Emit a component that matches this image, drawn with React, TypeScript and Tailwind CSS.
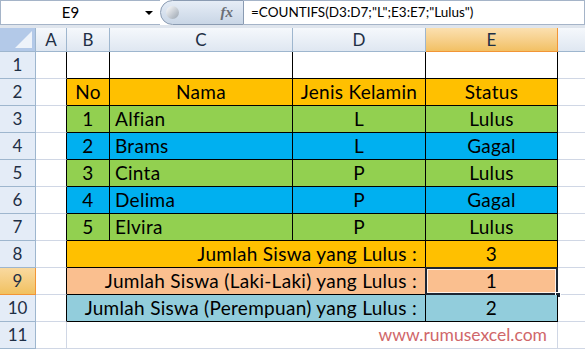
import React from 'react';

const font = { fontFamily: 'Lato, "Liberation Sans", sans-serif' };

interface Row {
  no?: string;
  nama?: string;
  jk?: string;
  status?: string;
  bg: string;
}

const students: Row[] = [
  { no: '1', nama: 'Alfian', jk: 'L', status: 'Lulus', bg: 'bg-[#92d050]' },
  { no: '2', nama: 'Brams', jk: 'L', status: 'Gagal', bg: 'bg-[#00b0f0]' },
  { no: '3', nama: 'Cinta', jk: 'P', status: 'Lulus', bg: 'bg-[#92d050]' },
  { no: '4', nama: 'Delima', jk: 'P', status: 'Gagal', bg: 'bg-[#00b0f0]' },
  { no: '5', nama: 'Elvira', jk: 'P', status: 'Lulus', bg: 'bg-[#92d050]' },
];

const summary = [
  { label: 'Jumlah Siswa yang Lulus :', value: '3', bg: 'bg-[#ffc000]', selected: false },
  { label: 'Jumlah Siswa (Laki-Laki) yang Lulus :', value: '1', bg: 'bg-[#fabf8f]', selected: true },
  { label: 'Jumlah Siswa (Perempuan) yang Lulus :', value: '2', bg: 'bg-[#92cddc]', selected: false },
];

function RowHead({ n, active }: { n: number; active?: boolean }) {
  return (
    <div
      className={
        'h-[27px] flex items-center justify-center text-[17px] text-[#1e2f45] border-r border-b ' +
        (active
          ? 'bg-gradient-to-b from-[#f9d99f] to-[#f1c15f] border-[#f29536]'
          : 'bg-[#e4ecf7] border-[#9eb6ce]')
      }
    >
      {n}
    </div>
  );
}

// blank cell in column A; right edge is the table's left border
function ColA({ inTable }: { inTable: boolean }) {
  return (
    <div
      className={
        'h-[27px] bg-white border-b border-b-[#d0d7e5] border-r ' +
        (inTable ? 'border-r-black' : 'border-r-[#d0d7e5]')
      }
    />
  );
}

function ColF() {
  return <div className="h-[27px] bg-white border-b border-[#d0d7e5]" />;
}

function Cell({
  children,
  bg,
  align = 'center',
  span,
}: {
  children?: React.ReactNode;
  bg: string;
  align?: 'center' | 'left' | 'right';
  span?: string;
}) {
  const justify =
    align === 'center' ? 'justify-center' : align === 'left' ? 'justify-start pl-[5px]' : 'justify-end pr-[8px]';
  return (
    <div
      className={`h-[27px] flex items-center ${justify} ${bg} ${span ?? ''} border-r border-b border-black text-[19px] tracking-[0.3px] text-black whitespace-nowrap`}
    >
      {children}
    </div>
  );
}

function FormulaBar() {
  return (
    <div className="flex h-[25px] bg-white">
      <div className="relative w-[160px] flex items-center justify-center border border-[#a5b4c8] border-r-0 text-[15px] text-black">
        <span className="-ml-[20px]">E9</span>
        <div className="absolute left-[144px] top-[10px] w-0 h-0 border-l-[4px] border-r-[4px] border-t-[4px] border-l-transparent border-r-transparent border-t-black" />
      </div>
      <div className="relative w-[84px] flex items-center justify-end pr-[10px] rounded-l-full border border-[#8a9bb2] bg-gradient-to-b from-[#e6edf6] to-[#c9d6e6]">
        <div className="absolute left-[5px] top-[5px] w-[13px] h-[13px] rounded-full bg-gradient-to-br from-[#ffffff] to-[#9aa4b0]" />
        <span className="italic font-bold text-[15px] text-[#6b6f75]" style={{ fontFamily: '"Liberation Serif", serif' }}>
          fx
        </span>
      </div>
      <div className="flex-1 flex items-center pl-[7px] border border-[#a5b4c8] border-l-0 text-[13.5px] text-black">
        =COUNTIFS(D3:D7;"L";E3:E7;"Lulus")
      </div>
    </div>
  );
}

export default function App() {
  return (
    <div className="w-[585px] h-[349px] overflow-hidden bg-white" style={font}>
      <FormulaBar />
      <div className="h-[3px] bg-[#dfe5ed]" />

      <div className="grid grid-cols-[36px_31px_43px_183px_133px_132px_1fr]">
        {/* column headers */}
        <div className="relative h-[24px] bg-[#b3c9e8] border-r border-b border-[#9eb6ce]">
          <div className="absolute right-[3px] bottom-[3px] w-0 h-0 border-b-[17px] border-l-[17px] border-b-[#eef3fa] border-l-transparent" />
        </div>
        {['A', 'B', 'C', 'D'].map((c) => (
          <div
            key={c}
            className="h-[24px] flex items-center justify-center text-[17px] text-[#1e2f45] bg-gradient-to-b from-[#f5f8fc] to-[#dfe7f1] border-r border-b border-[#9eb6ce]"
          >
            {c}
          </div>
        ))}
        <div className="h-[24px] flex items-center justify-center text-[17px] text-[#1e2f45] bg-gradient-to-b from-[#fbe0b0] to-[#f2c063] border-r border-b border-[#f29536]">
          E
        </div>
        <div className="h-[24px] bg-gradient-to-b from-[#f5f8fc] to-[#dfe7f1] border-b border-[#9eb6ce]" />

        {/* row 1 */}
        <RowHead n={1} />
        <ColA inTable />
        <Cell bg="bg-white" />
        <Cell bg="bg-white" />
        <Cell bg="bg-white" />
        <Cell bg="bg-white" />
        <ColF />

        {/* row 2 */}
        <RowHead n={2} />
        <ColA inTable />
        <Cell bg="bg-[#ffc000]">No</Cell>
        <Cell bg="bg-[#ffc000]">Nama</Cell>
        <Cell bg="bg-[#ffc000]">Jenis Kelamin</Cell>
        <Cell bg="bg-[#ffc000]">Status</Cell>
        <ColF />

        {students.map((s, i) => (
          <React.Fragment key={s.no}>
            <RowHead n={i + 3} />
            <ColA inTable />
            <Cell bg={s.bg}>{s.no}</Cell>
            <Cell bg={s.bg} align="left">
              {s.nama}
            </Cell>
            <Cell bg={s.bg}>{s.jk}</Cell>
            <Cell bg={s.bg}>{s.status}</Cell>
            <ColF />
          </React.Fragment>
        ))}

        {summary.map((r, i) => (
          <React.Fragment key={r.label}>
            <RowHead n={i + 8} active={r.selected} />
            <ColA inTable />
            <Cell bg={r.bg} align="right" span="col-span-3">
              {r.label}
            </Cell>
            <div className="relative">
              <Cell bg={r.bg}>{r.value}</Cell>
              {r.selected && (
                <>
                  <div className="absolute -left-px -top-px right-0 bottom-0 border-2 border-[#1c2633] pointer-events-none">
                    <div className="absolute inset-0 border border-white/80" />
                  </div>
                  <div className="absolute -right-[3px] -bottom-[3px] w-[6px] h-[6px] bg-[#1c2633] border border-white" />
                </>
              )}
            </div>
            <ColF />
          </React.Fragment>
        ))}

        {/* row 11 */}
        <RowHead n={11} />
        <ColA inTable={false} />
        <div className="col-span-4 h-[27px] flex items-center justify-end pr-[10px] bg-white border-r border-b border-[#d0d7e5] text-[17.5px] text-[#d0676a]">
          www.rumusexcel.com
        </div>
        <ColF />
      </div>
    </div>
  );
}
